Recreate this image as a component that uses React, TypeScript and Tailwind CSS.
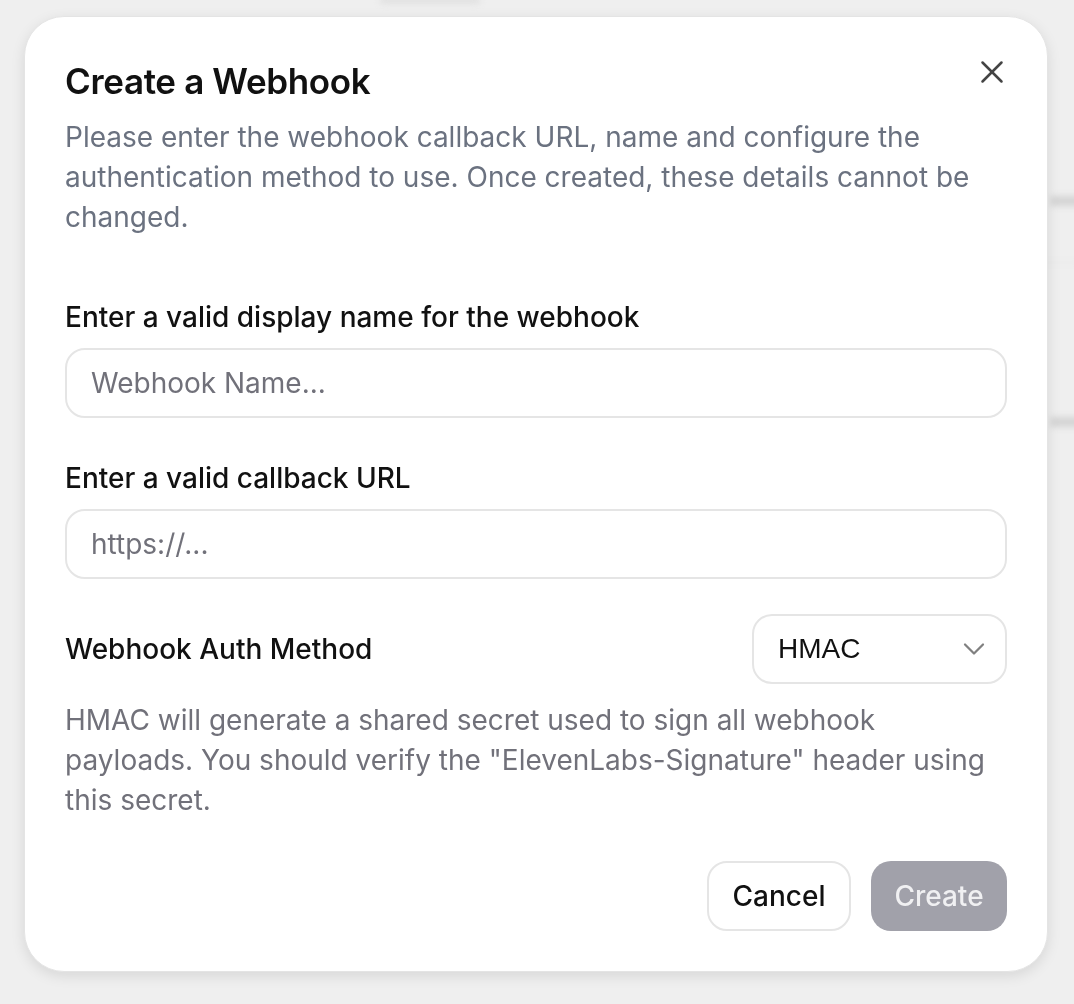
import { X, ChevronDown } from "lucide-react";

export default function App() {
  return (
    <div
      className="relative min-h-screen w-full overflow-hidden bg-[#efefef]"
      style={{ fontFamily: "Inter, 'Noto Sans', sans-serif" }}
    >
      {/* blurred page behind the dialog */}
      <div className="absolute inset-0 blur-[3px]">
        <div className="absolute left-[1050px] top-[196px] h-[10px] w-[40px] rounded bg-[#d4d4d4]" />
        <div className="absolute left-[1000px] top-[262px] h-px w-[80px] bg-[#e4e4e4]" />
        <div className="absolute left-[1050px] top-[417px] h-[10px] w-[40px] rounded bg-[#d4d4d4]" />
        <div className="absolute left-[380px] top-[-4px] h-[8px] w-[100px] rounded bg-[#e0e0e0]" />
      </div>

      <div className="relative px-6 pt-4">
        <div className="relative flex h-[956px] w-[1024px] flex-col rounded-[40px] border border-[#e4e4e4] bg-white px-10 pt-10 shadow-[0_4px_14px_rgba(0,0,0,0.10)]">
          <button className="absolute right-[36px] top-[36px] text-[#444]">
            <X size={38} strokeWidth={1.6} />
          </button>

          <h2 className="text-[35px] font-semibold leading-[48px] tracking-[-0.01em] text-[#111]">
            Create a Webhook
          </h2>
          <p className="mt-3 pr-6 text-[28px] leading-[40px] text-[#6b7280]">
            Please enter the webhook callback URL, name and configure the
            authentication method to use. Once created, these details cannot be
            changed.
          </p>

          <label className="mt-[60px] block text-[28px] font-medium leading-[40px] text-[#111]">
            Enter a valid display name for the webhook
          </label>
          <input
            placeholder="Webhook Name..."
            className="mt-[11px] h-[70px] w-full rounded-[20px] border-2 border-[#e5e5e5] px-6 text-[28px] text-[#111] outline-none placeholder:text-[#71717a]"
          />

          <label className="mt-[40px] block text-[28px] font-medium leading-[40px] text-[#111]">
            Enter a valid callback URL
          </label>
          <input
            placeholder="https://..."
            className="mt-[11px] h-[70px] w-full rounded-[20px] border-2 border-[#e5e5e5] px-6 text-[28px] text-[#111] outline-none placeholder:text-[#71717a]"
          />

          <div className="mt-[35px] flex items-center justify-between">
            <span className="text-[28px] font-medium leading-[40px] text-[#111]">
              Webhook Auth Method
            </span>
            <div className="flex h-[70px] w-[255px] items-center justify-between rounded-[20px] border-2 border-[#e5e5e5] pl-6 pr-[13px]">
              <span
                className="text-[28px] text-[#111]"
                style={{ fontFamily: "'Liberation Sans', Arial, sans-serif" }}
              >
                HMAC
              </span>
              <ChevronDown size={36} strokeWidth={1.5} className="text-[#808080]" />
            </div>
          </div>

          <p className="mt-4 max-w-[930px] text-[28px] leading-[40px] text-[#71717a]">
            HMAC will generate a shared secret used to sign all webhook
            payloads. You should verify the "ElevenLabs-Signature" header using
            this secret.
          </p>

          <div className="mt-[41px] flex justify-end gap-5">
            <button className="h-[70px] w-[144px] rounded-[20px] border-2 border-[#e5e5e5] bg-white text-[28px] font-medium text-[#111]">
              Cancel
            </button>
            <button className="h-[70px] w-[136px] rounded-[20px] bg-[#a1a1aa] text-[28px] font-medium text-[#f0f0f2]">
              Create
            </button>
          </div>
        </div>
      </div>
    </div>
  );
}
